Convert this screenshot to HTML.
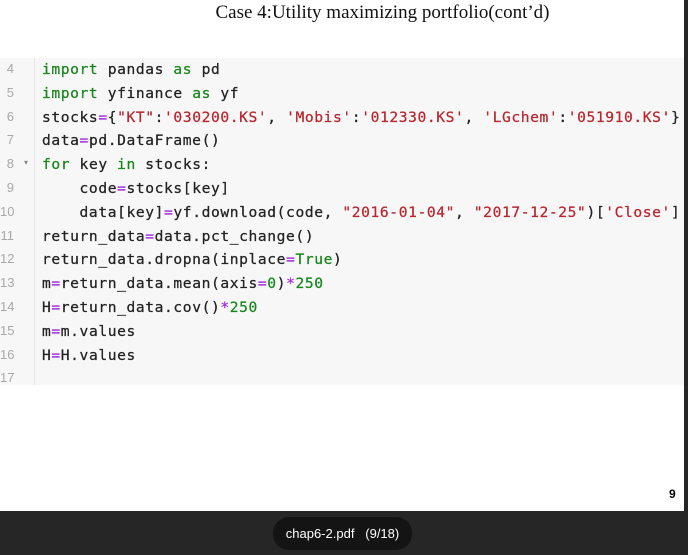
<!DOCTYPE html>
<html><head><meta charset="utf-8"><style>
html,body{margin:0;padding:0;width:688px;height:555px;overflow:hidden;background:#262626}
#page{position:absolute;left:0;top:0;width:684px;height:511px;background:#fff}
#title{position:absolute;left:0;width:765px;top:2px;text-align:center;font-family:"Liberation Serif",serif;font-size:19px;color:#111}
#code{position:absolute;left:0;top:58px;width:684px;height:327px;background:#f7f7f7}
#gut{position:absolute;left:34px;top:0;width:1px;height:327px;background:#e6e6e6}
.ln{position:absolute;left:0;width:14px;text-align:right;font-family:"Liberation Sans",sans-serif;font-size:13px;color:#a8a8a8}
.cl{position:absolute;left:42px;font-family:"DejaVu Sans Mono","Liberation Mono",monospace;font-size:14.6px;color:#222;white-space:pre;letter-spacing:0.6px;-webkit-text-stroke:0.25px currentColor}
.k{color:#17861b}.s{color:#b8262f}.o{color:#a52fe0}.n{color:#17861b}
#pn{position:absolute;left:669px;top:487px;font:bold 12px "Liberation Sans",sans-serif;color:#000}
#pill{position:absolute;left:273px;top:517px;width:139px;height:33px;border-radius:16px;background:#141414;color:#fff;font:13px "Liberation Sans",sans-serif;line-height:33px;text-align:center}
</style></head><body>
<div id="page">
<div id="title">Case 4:Utility maximizing portfolio(cont’d)</div>
<div id="code"><div id="gut"></div></div>
<div class="ln" style="top:61px">4</div>
<div class="ln" style="top:85px">5</div>
<div class="ln" style="top:109px">6</div>
<div class="ln" style="top:132px">7</div>
<div class="ln" style="top:156px">8</div><div style="position:absolute;left:24px;top:158px;font-size:8px;color:#888">▾</div>
<div class="ln" style="top:180px">9</div>
<div class="ln" style="top:204px">10</div>
<div class="ln" style="top:228px">11</div>
<div class="ln" style="top:251px">12</div>
<div class="ln" style="top:275px">13</div>
<div class="ln" style="top:299px">14</div>
<div class="ln" style="top:323px">15</div>
<div class="ln" style="top:347px">16</div>
<div class="ln" style="top:370px">17</div>
<div class="cl" style="top:61px"><span class="k">import</span> pandas <span class="k">as</span> pd</div>
<div class="cl" style="top:85px"><span class="k">import</span> yfinance <span class="k">as</span> yf</div>
<div class="cl" style="top:109px">stocks<span class="o">=</span>{<span class="s">"KT"</span>:<span class="s">'030200.KS'</span>, <span class="s">'Mobis'</span>:<span class="s">'012330.KS'</span>, <span class="s">'LGchem'</span>:<span class="s">'051910.KS'</span>}</div>
<div class="cl" style="top:132px">data<span class="o">=</span>pd.DataFrame()</div>
<div class="cl" style="top:156px"><span class="k">for</span> key <span class="k">in</span> stocks:</div>
<div class="cl" style="top:180px">    code<span class="o">=</span>stocks[key]</div>
<div class="cl" style="top:204px">    data[key]<span class="o">=</span>yf.download(code, <span class="s">"2016-01-04"</span>, <span class="s">"2017-12-25"</span>)[<span class="s">'Close'</span>]</div>
<div class="cl" style="top:228px">return_data<span class="o">=</span>data.pct_change()</div>
<div class="cl" style="top:251px">return_data.dropna(inplace<span class="o">=</span><span class="k">True</span>)</div>
<div class="cl" style="top:275px">m<span class="o">=</span>return_data.mean(axis<span class="o">=</span><span class="n">0</span>)<span class="o">*</span><span class="n">250</span></div>
<div class="cl" style="top:299px">H<span class="o">=</span>return_data.cov()<span class="o">*</span><span class="n">250</span></div>
<div class="cl" style="top:323px">m<span class="o">=</span>m.values</div>
<div class="cl" style="top:347px">H<span class="o">=</span>H.values</div>
<div id="pn">9</div>
</div>
<div id="pill">chap6-2.pdf &nbsp;&nbsp;(9/18)</div>
</body></html>
